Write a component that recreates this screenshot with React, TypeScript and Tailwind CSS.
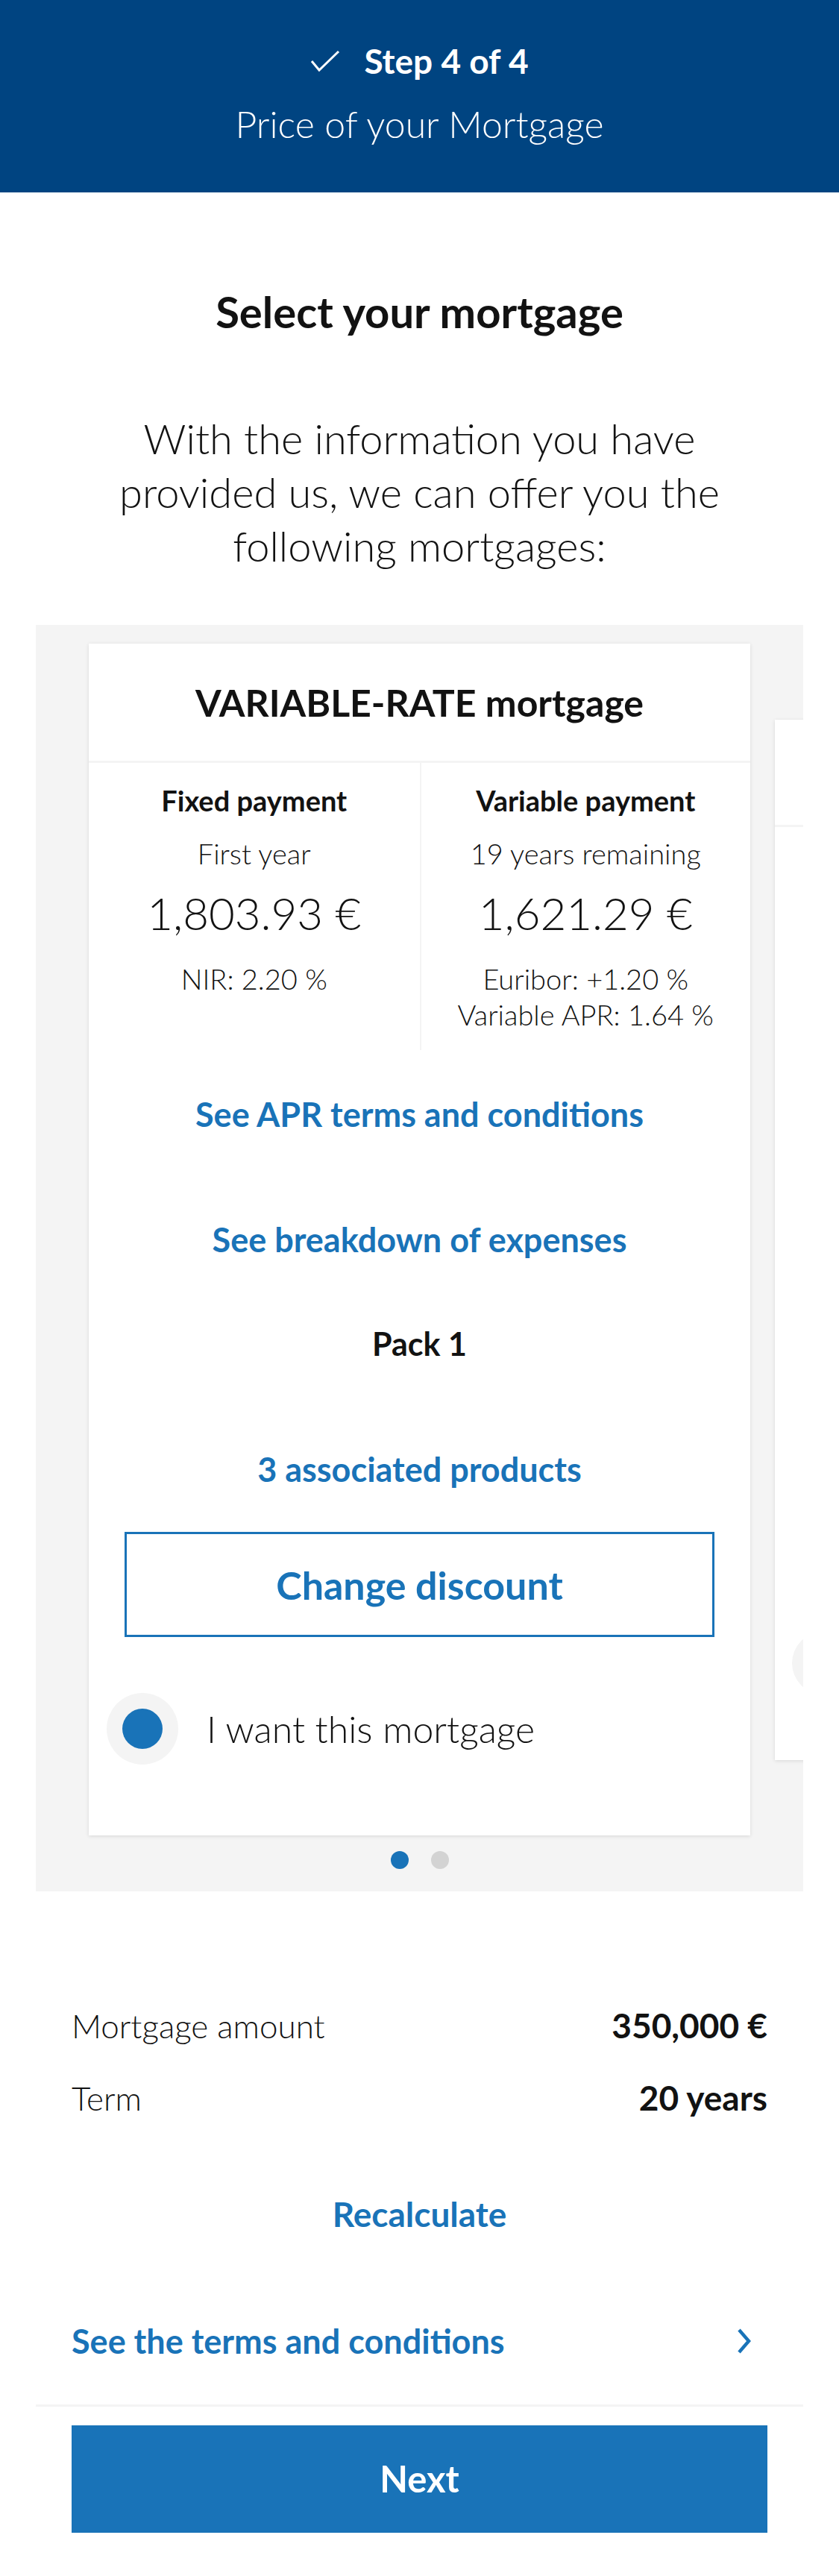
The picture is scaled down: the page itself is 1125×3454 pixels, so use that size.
import React from "react";

const blue = "text-[#1973b8]";

const MortgageCard: React.FC = () => {
  return (
    <div className="w-[887px] shrink-0 bg-white shadow-[0_1px_5px_rgba(0,0,0,0.12)]">
      <div className="h-[160px] flex items-center justify-center border-b-[3px] border-[#f4f4f4]">
        <p className="text-[50px] font-bold leading-[60px]">VARIABLE-RATE mortgage</p>
      </div>
      <div className="grid grid-cols-2">
        <div className="flex flex-col items-center pt-[26px] pb-[24px]">
          <p className="text-[38px] font-bold leading-[48px]">Fixed payment</p>
          <p className="mt-[23px] text-[38px] font-light leading-[48px]">First year</p>
          <p className="mt-[20px] text-[60px] font-light leading-[72px]">1,803.93 €</p>
          <p className="mt-[28px] text-[38px] font-light leading-[48px]">NIR: 2.20 %</p>
        </div>
        <div className="flex flex-col items-center pt-[26px] pb-[24px] border-l-[2px] border-[#f4f4f4]">
          <p className="text-[38px] font-bold leading-[48px]">Variable payment</p>
          <p className="mt-[23px] text-[38px] font-light leading-[48px]">19 years remaining</p>
          <p className="mt-[20px] text-[60px] font-light leading-[72px]">1,621.29 €</p>
          <p className="mt-[28px] text-[38px] font-light leading-[48px]">Euribor: +1.20 %</p>
          <p className="text-[38px] font-light leading-[48px]">Variable APR: 1.64 %</p>
        </div>
      </div>
      <div className="flex flex-col items-center px-[48px] pb-[95px]">
        <p className={`mt-[62px] text-[45px] font-bold leading-[48px] ${blue}`}>See APR terms and conditions</p>
        <p className={`mt-[120px] text-[45px] font-bold leading-[48px] ${blue}`}>See breakdown of expenses</p>
        <p className="mt-[92px] text-[43px] font-bold leading-[48px]">Pack 1</p>
        <p className={`mt-[120px] text-[45px] font-bold leading-[48px] ${blue}`}>3 associated products</p>
        <button className={`mt-[60px] w-full h-[141px] border-[3px] border-[#1973b8] text-[52px] font-bold ${blue}`}>
          Change discount
        </button>
        <div className="mt-[75px] self-stretch -ml-[24px] flex items-center gap-[38px]">
          <span className="w-[96px] h-[96px] rounded-full bg-[#f4f4f4] flex items-center justify-center">
            <span className="w-[54px] h-[54px] rounded-full bg-[#1973b8]" />
          </span>
          <span className="text-[50px] font-light leading-[60px]">I want this mortgage</span>
        </div>
      </div>
    </div>
  );
};

// next offer, shown smaller and mostly out of view
const PeekCard: React.FC = () => (
  <div className="w-[773px] h-[1395px] shrink-0 bg-white shadow-[0_1px_5px_rgba(0,0,0,0.12)]">
    <div className="h-[144px] border-b-[3px] border-[#f4f4f4]" />
    <div className="mt-[1079px] ml-[23px] w-[84px] h-[84px] rounded-full bg-[#f4f4f4]" />
  </div>
);

export default function App() {
  return (
    <div className="w-[1125px] bg-white font-['Lato',sans-serif] text-[#121212]">
      <header className="h-[258px] bg-[#004481] text-white flex flex-col items-center">
        <div className="mt-[58px] flex items-center gap-[32px]">
          <svg width="40" height="30" viewBox="0 0 40 30" fill="none">
            <polyline points="2,15 12,27 38,2" stroke="white" strokeWidth="3" />
          </svg>
          <span className="text-[46px] font-bold leading-[48px]">Step 4 of 4</span>
        </div>
        <p className="mt-[30px] text-[50px] font-light leading-[60px]">Price of your Mortgage</p>
      </header>

      <h1 className="mt-[130px] text-center text-[58px] font-bold leading-[60px]">Select your mortgage</h1>
      <p className="mt-[104px] mx-auto w-[940px] text-center text-[56px] font-light leading-[72px]">
        With the information you have provided us, we can offer you the following mortgages:
      </p>

      <section className="mt-[70px] mx-[48px] bg-[#f4f4f4] overflow-hidden">
        <div className="flex items-center gap-[33px] pl-[71px] pt-[25px]">
          <MortgageCard />
          <PeekCard />
        </div>
        <div className="flex justify-center gap-[30px] pt-[21px] pb-[30px]">
          <span className="w-[24px] h-[24px] rounded-full bg-[#1973b8]" />
          <span className="w-[24px] h-[24px] rounded-full bg-[#d3d3d3]" />
        </div>
      </section>

      <div className="px-[96px]">
        <div className="mt-[156px] flex justify-between leading-[48px]">
          <span className="text-[44px] font-light">Mortgage amount</span>
          <span className="text-[46px] font-bold">350,000 €</span>
        </div>
        <div className="mt-[49px] flex justify-between leading-[48px]">
          <span className="text-[44px] font-light">Term</span>
          <span className="text-[46px] font-bold">20 years</span>
        </div>
        <p className={`mt-[108px] text-center text-[46px] font-bold leading-[48px] ${blue}`}>Recalculate</p>
        <div className="mt-[122px] flex items-center justify-between">
          <span className={`text-[45px] font-bold leading-[48px] ${blue}`}>See the terms and conditions</span>
          <svg width="22" height="36" viewBox="0 0 22 36" fill="none" className="mr-[20px]">
            <polyline points="4,3 17,18 4,33" stroke="#1973b8" strokeWidth="4.5" />
          </svg>
        </div>
      </div>
      <div className="mt-[61px] mx-[48px] h-[3px] bg-[#f4f4f4]" />
      <div className="px-[96px] pt-[25px] pb-[61px]">
        <button className="w-full h-[144px] bg-[#1973b8] text-white text-[49px] font-bold">Next</button>
      </div>
    </div>
  );
}
